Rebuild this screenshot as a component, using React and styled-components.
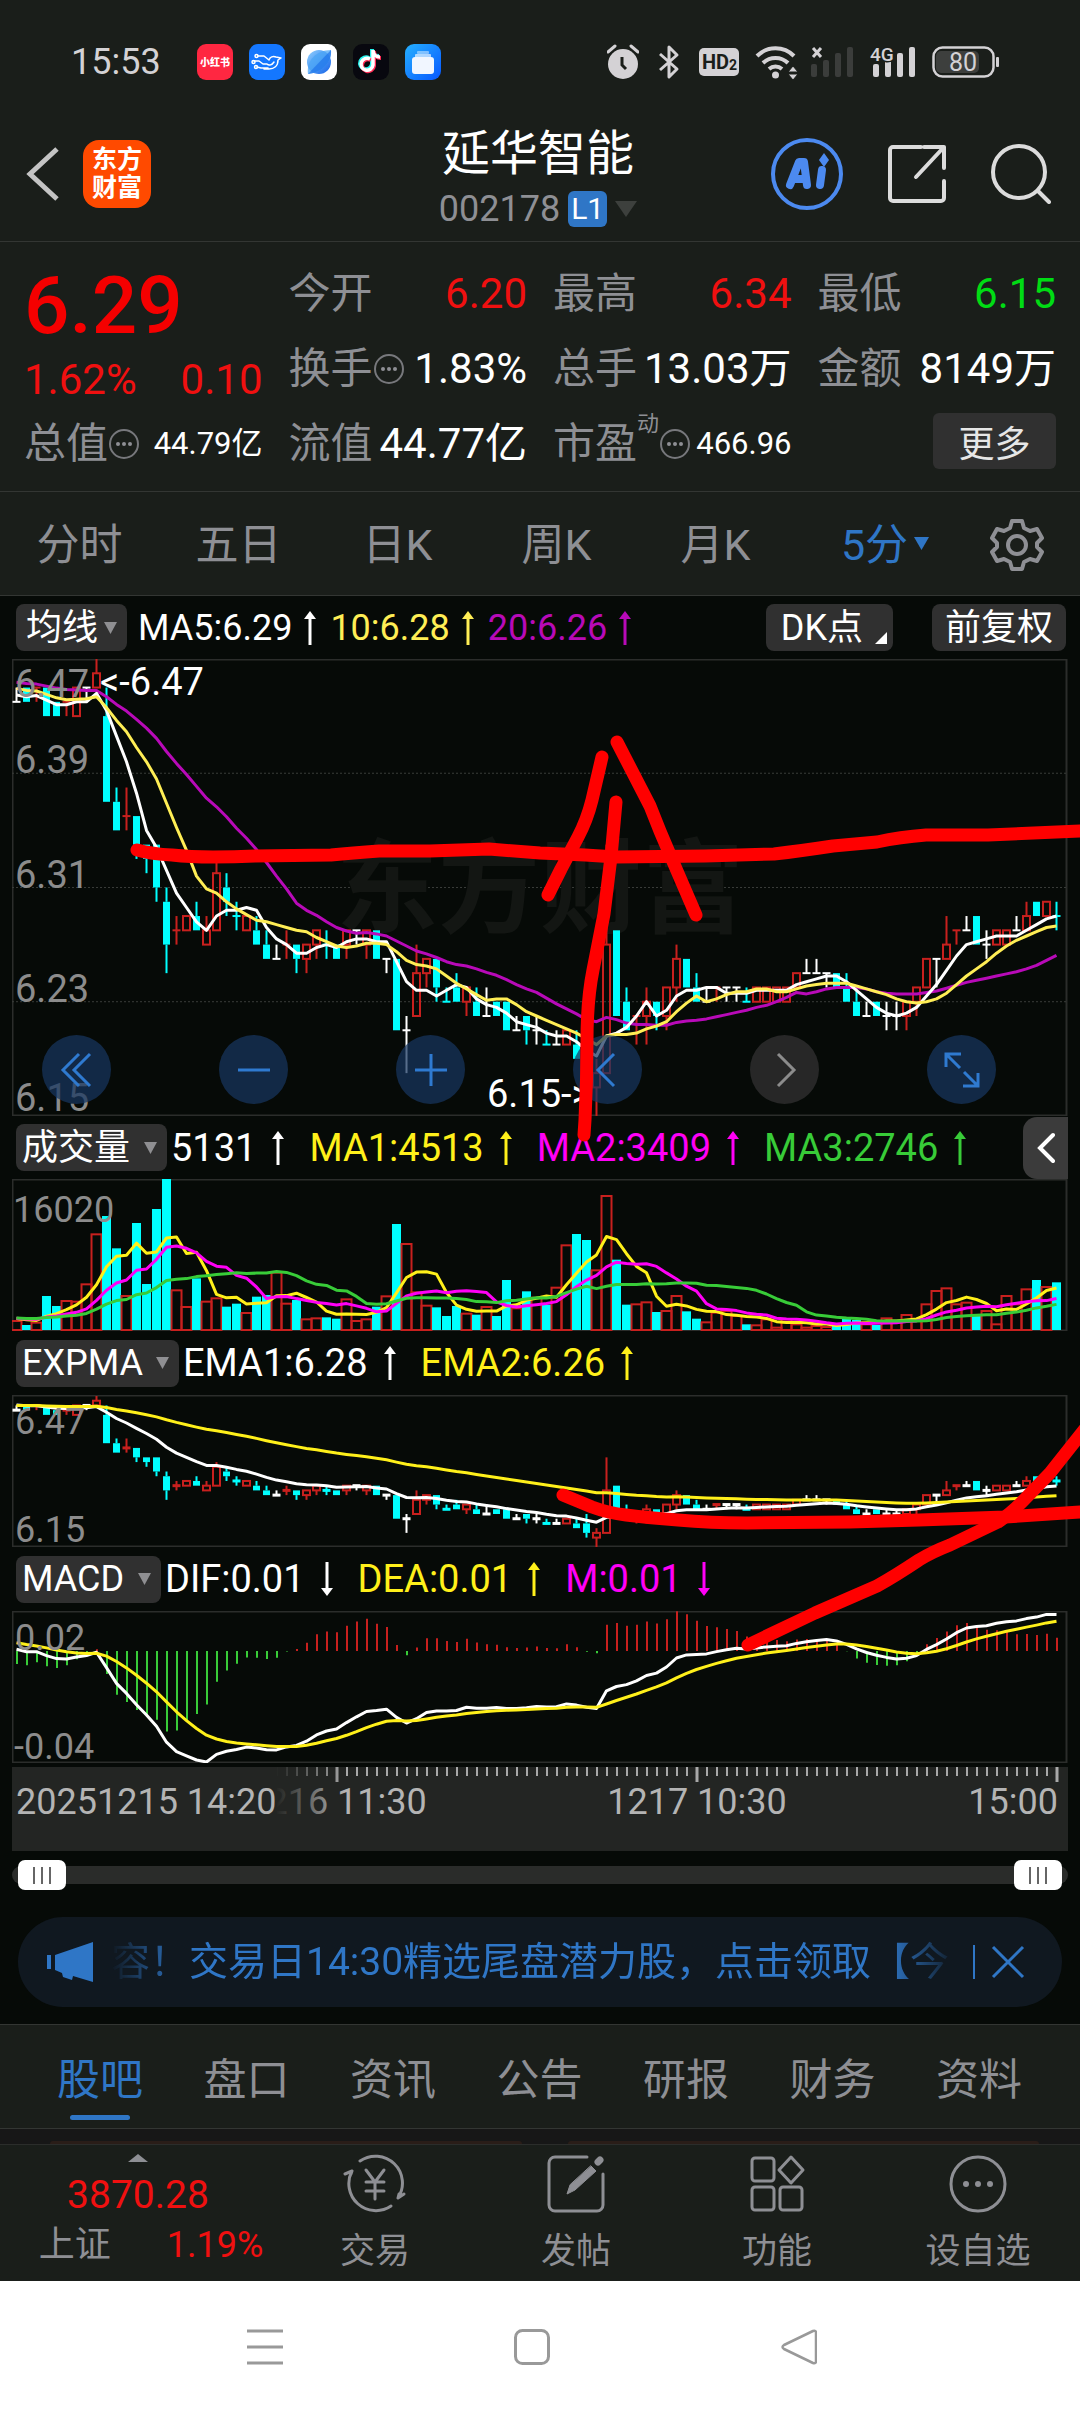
import React from "react";
import styled, { createGlobalStyle, css } from "styled-components";

const color = {
  panel: "#1a1e1a",
  chart: "#060a07",
  line: "#333633",
  frame: "#2b2d2b",
  chip: "#303030",
  muted: "#8e8f94",
  blue: "#2f76c6",
  red: "#f01010",
  green: "#00dc14",
  white: "#ffffff",
  yellow: "#fff01a",
  softYellow: "#ffee55",
  magenta: "#ff00f6",
  purple: "#b80ab8",
  ma3: "#38cc38",
  candleRed: "#c8201e",
  cyan: "#00ffff",
};

const GlobalStyle = createGlobalStyle`
  *, *::before, *::after { box-sizing: border-box; }
  body {
    margin: 0;
    background: ${color.panel};
    color: #fff;
    font-family: Roboto, "Noto Sans CJK SC", sans-serif;
  }
  button, select, input { font: inherit; color: inherit; margin: 0; }
  button { background: none; border: 0; padding: 0; cursor: pointer; }
  svg { display: block; }
  svg text { font-family: Roboto, "Noto Sans CJK SC", sans-serif; }
`;

/* ---------- market data: [kind, open/close top, open/close bottom, high, low], cents above 6.00 ---------- */

const CANDLES = [
  ["w", 44, 44, 45, 44], ["c", 45, 44, 45, 44], ["r", 45, 45, 45, 44], ["c", 45, 43, 45, 43], ["c", 44, 43, 44, 43],
  ["r", 44, 44, 44, 43], ["r", 45, 43, 45, 43], ["w", 45, 45, 45, 44], ["r", 46, 45, 47, 45], ["c", 43, 37, 45, 37],
  ["c", 37, 35, 38, 35], ["r", 36, 36, 38, 35], ["c", 36, 34, 36, 33], ["c", 34, 33, 34, 32], ["c", 34, 31, 34, 30],
  ["c", 30, 27, 31, 25], ["r", 28, 28, 29, 27], ["r", 29, 28, 29, 28], ["c", 29, 28, 30, 28], ["r", 28, 27, 29, 27],
  ["r", 32, 28, 33, 28], ["c", 31, 30, 32, 29], ["c", 29, 29, 30, 28], ["r", 29, 28, 29, 28], ["c", 28, 27, 29, 27],
  ["c", 27, 26, 28, 26], ["w", 26, 26, 27, 26], ["r", 27, 27, 28, 26], ["c", 27, 26, 27, 25], ["r", 27, 26, 27, 25],
  ["r", 28, 27, 28, 26], ["c", 27, 27, 28, 26], ["c", 27, 26, 27, 26], ["r", 28, 27, 28, 26], ["w", 28, 28, 28, 27],
  ["r", 28, 27, 28, 26], ["c", 28, 26, 28, 26], ["w", 26, 26, 26, 25], ["c", 26, 21, 26, 21], ["w", 21, 21, 22, 18],
  ["r", 25, 22, 27, 22], ["r", 26, 25, 26, 24], ["c", 26, 24, 26, 23], ["c", 23, 23, 24, 23], ["c", 24, 23, 25, 23],
  ["r", 24, 23, 24, 22], ["c", 23, 22, 24, 22], ["w", 22, 22, 24, 22], ["c", 23, 22, 23, 22], ["c", 23, 21, 23, 21],
  ["w", 21, 21, 22, 21], ["c", 22, 21, 22, 20], ["w", 21, 21, 22, 20], ["c", 20, 20, 21, 20], ["w", 20, 20, 21, 20],
  ["r", 21, 20, 21, 20], ["c", 20, 19, 21, 19], ["c", 20, 18, 22, 17], ["r", 18, 17, 19, 15], ["r", 27, 18, 34, 18],
  ["c", 28, 22, 28, 22], ["c", 23, 21, 24, 21], ["r", 22, 22, 22, 20], ["r", 23, 22, 24, 20], ["c", 23, 22, 23, 21],
  ["r", 24, 22, 24, 21], ["r", 26, 24, 27, 23], ["c", 26, 24, 26, 24], ["c", 24, 23, 25, 23], ["w", 23, 23, 24, 23],
  ["r", 24, 24, 24, 23], ["w", 24, 24, 24, 23], ["w", 24, 24, 24, 23], ["c", 23, 23, 24, 23], ["r", 24, 23, 24, 23],
  ["r", 24, 23, 24, 23], ["r", 24, 23, 24, 23], ["r", 24, 23, 24, 23], ["r", 25, 24, 25, 24], ["w", 25, 25, 26, 25],
  ["w", 25, 25, 26, 25], ["w", 25, 25, 25, 24], ["c", 25, 24, 25, 24], ["c", 24, 23, 25, 23], ["c", 23, 22, 24, 22],
  ["w", 22, 22, 23, 22], ["c", 23, 22, 23, 22], ["w", 22, 22, 23, 21], ["w", 22, 22, 23, 21], ["r", 23, 22, 23, 21],
  ["r", 24, 23, 24, 22], ["r", 26, 24, 26, 24], ["w", 26, 26, 26, 24], ["r", 27, 26, 29, 26], ["r", 28, 28, 28, 27],
  ["w", 28, 28, 29, 28], ["c", 29, 27, 29, 27], ["w", 27, 27, 28, 26], ["r", 28, 27, 28, 27], ["r", 28, 27, 28, 27],
  ["w", 28, 28, 29, 28], ["r", 29, 28, 30, 28], ["c", 30, 29, 30, 29], ["r", 30, 29, 30, 29], ["c", 29, 29, 30, 28],
];

const VOLUMES = [
  30, 15, 25, 102, 72, 90, 88, 140, 290, 342, 245, 105, 321, 138, 363, 453, 122, 72, 155, 88, 98, 70, 79, 54, 100,
  105, 175, 82, 90, 35, 38, 38, 34, 95, 30, 35, 70, 104, 318, 261, 116, 76, 68, 42, 72, 52, 46, 72, 42, 150,
  68, 116, 100, 76, 130, 257, 288, 270, 182, 405, 211, 76, 80, 86, 54, 60, 105, 56, 34, 26, 55, 60, 45, 17, 17,
  35, 10, 35, 20, 10, 15, 12, 12, 34, 30, 20, 15, 38, 30, 48, 35, 80, 120, 128, 80, 85, 44, 60, 20, 105,
  80, 125, 150, 132, 143,
];

const HISTORY = [...Array(10).fill(45.8), ...Array(5).fill(45.4), ...Array(4).fill(44.6)];
const closes = CANDLES.map(([kind, top, bottom]) => (kind === "c" ? bottom : top));

const average = (history, values, span) => {
  const all = [...history, ...values];
  return values.map((_, i) => {
    const end = i + history.length + 1;
    return all.slice(end - span, end).reduce((a, b) => a + b, 0) / span;
  });
};

const ema = (values, span, start) => {
  let last = start;
  return values.map((v, i) => {
    if (i > 0) last += (2 / (span + 1)) * (v - last);
    return last;
  });
};

const xAt = (i) => 4.5 + 10 * i;
const toPath = (values, y) => values.map((v, i) => `${i ? "L" : "M"}${xAt(i)} ${y(v).toFixed(1)}`).join("");

const CANDLE_COLORS = { w: "#ffffff", c: color.cyan, r: color.candleRed };

function Candles({ y, bar }) {
  return (
    <g>
      {CANDLES.map(([kind, top, bottom, high, low], i) => {
        const x = xAt(i);
        const paint = CANDLE_COLORS[kind];
        return (
          <g key={i} stroke={paint} strokeWidth="2" fill="none">
            {high > top && <path d={`M${x} ${y(high)}V${y(top)}`} />}
            {low < bottom && <path d={`M${x} ${y(bottom)}V${y(low)}`} />}
            {top === bottom && <path strokeWidth={bar} d={`M${x - 4} ${y(top)}h8`} />}
            {top !== bottom && kind === "c" && (
              <rect x={x - 3.5} y={y(top)} width="7" height={y(bottom) - y(top)} fill={paint} stroke="none" />
            )}
            {top !== bottom && kind === "r" && (
              <rect x={x - 3.5} y={y(top)} width="7" height={y(bottom) - y(top)} />
            )}
          </g>
        );
      })}
    </g>
  );
}

const Line = ({ d, stroke, width = 3 }) => (
  <path d={d} fill="none" stroke={stroke} strokeWidth={width} strokeLinejoin="round" />
);

const Frame = ({ height }) => (
  <rect x="0.5" y="0.5" width="1054" height={height - 1} fill="none" stroke={color.frame} strokeWidth="2" />
);

function PriceChart() {
  const y = (p) => (47 - p) * 14.28;
  return (
    <ChartSvg viewBox="0 0 1056 457" role="img" aria-label="5分 K线">
      <Frame height={457} />
      {[39, 31, 23].map((p) => (
        <path key={p} d={`M0 ${y(p)}H1055`} stroke="#3a3d3a" strokeDasharray="2 2" />
      ))}
      <text x="528" y="266" textAnchor="middle" fontSize="102" fontWeight="700" fill="#131613">东方财富</text>
      <Candles y={y} bar={2} />
      <Line d={toPath(average(HISTORY, closes, 20), y)} stroke={color.purple} />
      <Line d={toPath(average(HISTORY, closes, 5), y)} stroke="#fff" />
      <Line d={toPath(average(HISTORY, closes, 10), y)} stroke={color.softYellow} />
      <g fontSize="38" fill="#8c8c8c">
        <text x="3" y="38">6.47</text>
        <text x="3" y="114">6.39</text>
        <text x="3" y="229">6.31</text>
        <text x="3" y="343">6.23</text>
        <text x="3" y="452">6.15</text>
      </g>
      <g fontSize="38" fill="#fff">
        <text x="88" y="36">&lt;-6.47</text>
        <text x="475" y="448">6.15-&gt;</text>
      </g>
    </ChartSvg>
  );
}

function VolumeChart() {
  const y = (v) => 151 - v / 3;
  const pad = Array(19).fill(36);
  return (
    <ChartSvg viewBox="0 0 1056 152" role="img" aria-label="成交量">
      <Frame height={152} />
      {VOLUMES.map((v, i) =>
        CANDLES[i][0] === "c" ? (
          <rect key={i} x={xAt(i) - 4.5} y={y(v)} width="9" height={v / 3} fill={color.cyan} />
        ) : (
          <rect key={i} x={xAt(i) - 5} y={y(v) + 1} width="10" height={v / 3 - 1} fill="none" stroke={color.candleRed} strokeWidth="2" />
        )
      )}
      <Line d={toPath(average(pad, VOLUMES, 5), y)} stroke={color.yellow} />
      <Line d={toPath(average(pad, VOLUMES, 10), y)} stroke={color.magenta} />
      <Line d={toPath(average(pad, VOLUMES, 20), y)} stroke={color.ma3} />
      <text x="1" y="43" fontSize="36" fill="#8c8c8c">16020</text>
    </ChartSvg>
  );
}

function ExpmaChart() {
  const y = (p) => 1 + (47 - p) * 4.72;
  return (
    <ChartSvg viewBox="0 0 1056 152" role="img" aria-label="EXPMA">
      <Frame height={152} />
      <Candles y={y} bar={3} />
      <Line d={toPath(ema(closes, 12, 45.1), y)} stroke="#fff" />
      <Line d={toPath(ema(closes, 50, 45), y)} stroke={color.yellow} />
      <g fontSize="36" fill="#8c8c8c">
        <text x="3" y="39">6.47</text>
        <text x="3" y="147">6.15</text>
      </g>
    </ChartSvg>
  );
}

function MacdChart() {
  const fast = ema(closes, 12, 45.18);
  const slow = ema(closes, 26, 45.11);
  const dif = fast.map((v, i) => v - slow[i]);
  const dea = ema(dif, 9, 0.33);
  const scale = 111 / -Math.min(...dif);
  const y = (v) => 40 - v * scale;
  return (
    <ChartSvg viewBox="0 0 1056 152" role="img" aria-label="MACD">
      <Frame height={152} />
      {dif.map((v, i) => {
        const m = 2 * (v - dea[i]);
        return <path key={i} d={`M${xAt(i) + 0.5} 40V${y(m)}`} stroke={m > 0 ? color.candleRed : color.ma3} strokeWidth="2" />;
      })}
      <Line d={toPath(dif, y)} stroke="#fff" />
      <Line d={toPath(dea, y)} stroke={color.yellow} />
      <g fontSize="36" fill="#8c8c8c">
        <text x="3" y="39">0.02</text>
        <text x="2" y="148">-0.04</text>
      </g>
    </ChartSvg>
  );
}

function TimeAxis() {
  const major = [32, 68, 104];
  return (
    <ChartSvg viewBox="0 0 1056 84" role="img" aria-label="时间轴">
      <defs>
        <linearGradient id="axisFade">
          <stop offset="0" stopColor="#232523" />
          <stop offset="1" stopColor="#232523" stopOpacity="0" />
        </linearGradient>
      </defs>
      <rect width="1056" height="84" fill="#232523" />
      {CANDLES.map((_, i) => {
        const big = major.includes(i);
        return i > 25 && <path key={i} d={`M${xAt(i) + 0.5} 0v${big ? 15 : 9}`} stroke="#a8a8a8" strokeWidth={big ? 3 : 2} />;
      })}
      <g fontSize="36" fill="#b4b4b4">
        <text x="325" y="47" textAnchor="middle">1216 11:30</text>
        <text x="685" y="47" textAnchor="middle">1217 10:30</text>
        <text x="1046" y="47" textAnchor="end">15:00</text>
        <rect width="265" height="84" fill="#232523" />
        <rect x="264" width="70" height="84" fill="url(#axisFade)" />
        <text x="4" y="47">20251215 14:20</text>
      </g>
    </ChartSvg>
  );
}

const STROKES = [
  "M137 850Q152 854 172 855Q190 857 213 857Q235 857 255 856L331 855Q352 853 379 851L430 851L489 849Q515 851 540 853L585 855L616 857L705 856L774 854Q800 851 833 846L877 842Q900 837 926 835H988L1080 831",
  "M602 757L592 800Q587 820 578 837L561 869L548 895",
  "M617 742L650 806Q660 832 671 857L696 915",
  "M616 802L611 857L604 914L593 970Q587 1000 587 1040Q587 1080 585 1120L584 1135",
  "M563 1495L592 1507Q608 1513 626 1515Q650 1518 678 1520Q710 1523 747 1523L850 1522L919 1520L1005 1517L1080 1512",
  "M748 1645L815 1613L877 1586Q895 1576 919 1560Q932 1552 950 1545L998 1522Q1010 1514 1022 1502L1050 1473L1092 1420",
];

/* ---------- layout parts ---------- */

const Page = styled.main`
  display: flex;
  flex-direction: column;
  min-width: 0;
  overflow: hidden;
`;

const StatusBar = styled.div`
  display: flex;
  align-items: center;
  justify-content: space-between;
  height: 106px;
  padding: 18px 81px 0 71px;
  color: #d4d2d5;
`;

const StatusGroup = styled.div`
  display: flex;
  align-items: center;
  gap: 16px;
`;

const Clock = styled.time`
  font-size: 36px;
  line-height: 40px;
  margin-right: 20px;
`;

const Header = styled.header`
  display: grid;
  grid-template-columns: 1fr auto 1fr;
  align-items: center;
  height: 136px;
  padding: 0 29px 0 25px;
  border-bottom: 1px solid ${color.line};
`;

const HeaderSide = styled.div`
  display: flex;
  align-items: center;
  justify-content: ${(p) => (p.$end ? "flex-end" : "flex-start")};
  gap: ${(p) => (p.$end ? 44 : 24)}px;
`;

const Logo = styled.div`
  display: grid;
  place-content: center;
  width: 68px;
  height: 68px;
  border-radius: 16px;
  background: #ff4a00;
  font-size: 25px;
  font-weight: 700;
  line-height: 28px;
  text-align: center;
`;

const TitleBlock = styled.div`
  display: flex;
  flex-direction: column;
  align-items: center;
  padding-top: 10px;
`;

const Title = styled.h1`
  margin: 0;
  font-size: 48px;
  font-weight: 400;
  line-height: 60px;
`;

const Code = styled.button`
  display: flex;
  align-items: center;
  gap: 8px;
  font-size: 36px;
  line-height: 50px;
  color: ${color.muted};
`;

const Level = styled.span`
  width: 39px;
  border-radius: 6px;
  background: ${color.blue};
  color: #fff;
  font-size: 30px;
  line-height: 36px;
  text-align: center;
`;

const Quote = styled.section`
  display: grid;
  grid-template-columns: repeat(4, 1fr);
  grid-template-rows: repeat(3, 75px);
  column-gap: 26px;
  padding: 14px 24px 10px;
  border-bottom: 1px solid ${color.line};
`;

const Headline = styled.div`
  display: flex;
  flex-direction: column;
  grid-row: span 2;
  padding-top: 7px;
  color: ${color.red};
`;

const Price = styled.strong`
  font-size: 80px;
  font-weight: 500;
  line-height: 86px;
  color: #f50000;
`;

const Change = styled.div`
  display: flex;
  justify-content: space-between;
  font-size: 42px;
  line-height: 62px;
`;

const Cell = styled.div`
  display: flex;
  align-items: center;
  white-space: nowrap;
  font-size: 42px;
  line-height: 60px;
`;

const CellLabel = styled.span`
  color: ${color.muted};
`;

const Superscript = styled.sup`
  align-self: flex-start;
  font-size: 22px;
  line-height: 36px;
  color: ${color.muted};
`;

const CellValue = styled.span`
  margin-left: auto;
  font-size: ${(p) => (p.$small ? 31 : 42)}px;
  color: ${(p) => p.$tone || "#fff"};
`;

const MoreButton = styled.button`
  justify-self: end;
  align-self: center;
  width: 123px;
  height: 56px;
  margin-bottom: 6px;
  border-radius: 6px;
  background: ${color.chip};
  color: #e6e6e6;
  font-size: 36px;
`;

const Periods = styled.nav`
  display: grid;
  grid-template-columns: repeat(6, 159fr) 126fr;
  align-items: center;
  justify-items: center;
  height: 104px;
  padding-top: 2px;
  border-bottom: 1px solid ${color.line};
`;

const Period = styled.button`
  position: relative;
  font-size: 43px;
  line-height: 60px;
  color: ${(p) => (p.$active ? color.blue : color.muted)};
`;

const PeriodMark = styled.span`
  position: absolute;
  left: calc(100% + 6px);
  top: 22px;
`;

const ChartSection = styled.section`
  position: relative;
  background: ${color.chart};
  padding-bottom: 17px;
  border-bottom: 1px solid ${color.line};
`;

const ChartBox = styled.div`
  position: relative;
  margin: 0 12px;
`;

const ChartSvg = styled.svg`
  width: 100%;
  height: auto;
`;

const Annotations = styled.svg`
  position: absolute;
  inset: 0 0 auto 0;
  width: 100%;
  height: auto;
  pointer-events: none;
`;

const IndicatorRow = styled.div`
  display: flex;
  align-items: center;
  height: ${(p) => p.$height || 64}px;
  padding: 0 14px 0 16px;
  white-space: nowrap;
`;

const Picker = styled.label`
  display: flex;
  align-items: center;
  gap: ${(p) => (p.$compact ? 5 : 13)}px;
  height: 47px;
  padding: 0 10px 0 ${(p) => (p.$compact ? 10 : 6)}px;
  margin-right: ${(p) => (p.$compact ? 11 : 4)}px;
  border-radius: 8px;
  background: ${color.chip};
`;

const PickerSelect = styled.select`
  appearance: none;
  border: 0;
  padding: 0;
  background: transparent;
  color: #fff;
  font-size: 36px;
  line-height: 44px;
  outline: none;
`;

const Readings = styled.div`
  display: flex;
  align-items: center;
  gap: ${(p) => (p.$compact ? 14 : 25)}px;
  font-size: ${(p) => (p.$compact ? 36 : 38)}px;
  line-height: 48px;
`;

const Reading = styled.span`
  display: flex;
  align-items: center;
  gap: ${(p) => (p.$compact ? 12 : 16)}px;
  color: ${(p) => p.$tone};
`;

const Chip = styled.button`
  display: flex;
  align-items: center;
  justify-content: center;
  gap: 12px;
  height: 47px;
  padding: 0 ${(p) => (p.$corner ? 6 : 13)}px 0 ${(p) => (p.$corner ? 15 : 13)}px;
  margin-left: ${(p) => (p.$push ? "auto" : "39px")};
  border-radius: 8px;
  background: ${color.chip};
  color: #fff;
  font-size: 36px;
  line-height: 44px;
`;

const Corner = styled.span`
  align-self: flex-end;
  margin-bottom: 7px;
  border: 6px solid;
  border-color: transparent #fff #fff transparent;
`;

const Expand = styled.button`
  display: grid;
  place-content: center;
  width: 45px;
  height: 62px;
  margin: 0 -2px 0 auto;
  border-radius: 14px 0 0 14px;
  background: #3b3b3b;
`;

const ZoomBar = styled.div`
  position: absolute;
  left: 30px;
  right: 72px;
  bottom: 12px;
  display: flex;
  justify-content: space-between;
`;

const Round = styled.button`
  display: grid;
  place-content: center;
  width: 69px;
  height: 69px;
  border-radius: 50%;
  background: ${(p) => (p.$off ? "#2a2a2aee" : "#17365fb8")};
`;

const AxisBox = styled(ChartBox)`
  margin-top: 4px;
`;

const Slider = styled.div`
  position: relative;
  display: flex;
  align-items: center;
  height: 30px;
  margin: 9px 12px 27px;
`;

const Track = styled.div`
  flex: 1;
  height: 18px;
  border-radius: 9px;
  background: #2a2c2a;
`;

const thumb = css`
  appearance: none;
  width: 48px;
  height: 30px;
  border: 0;
  border-radius: 7px;
  pointer-events: auto;
  background:
    linear-gradient(#666, #666) 15px 7px / 2px 17px no-repeat,
    linear-gradient(#666, #666) 23px 7px / 2px 17px no-repeat,
    linear-gradient(#666, #666) 31px 7px / 2px 17px no-repeat,
    #fff;
`;

const Handle = styled.input`
  position: absolute;
  inset: 0 6px;
  width: calc(100% - 12px);
  height: 30px;
  appearance: none;
  background: transparent;
  pointer-events: none;
  &::-webkit-slider-thumb { ${thumb} }
  &::-moz-range-thumb { ${thumb} }
`;

const Notice = styled.aside`
  display: flex;
  align-items: center;
  height: 90px;
  margin: 0 18px;
  padding: 0 37px 0 29px;
  border-radius: 45px;
  background: #101820;
  color: ${color.blue};
`;

const NoticeLink = styled.a`
  flex: 1;
  min-width: 0;
  overflow: hidden;
  margin: 0 15px 0 18px;
  color: inherit;
  text-decoration: none;
  white-space: nowrap;
  font-size: 39px;
  line-height: 60px;
  mask-image: linear-gradient(90deg, transparent, #000 70px calc(100% - 70px), transparent);
`;

const NoticeClose = styled.button`
  display: flex;
  align-items: center;
  padding-left: 16px;
  border-left: 2px solid ${color.blue};
`;

const Tabs = styled.nav`
  display: flex;
  justify-content: space-between;
  height: 104px;
  padding: 24px 58px 8px 57px;
  border-bottom: 1px solid ${color.line};
`;

const Tab = styled.a`
  display: flex;
  flex-direction: column;
  align-items: center;
  gap: 4px;
  font-size: 43px;
  line-height: 62px;
  text-decoration: none;
  color: ${(p) => (p.$active ? color.blue : color.muted)};
  &::after {
    content: "";
    width: 60px;
    height: 6px;
    border-radius: 3px;
    background: ${(p) => (p.$active ? color.blue : "transparent")};
  }
`;

const FeedPeek = styled.div`
  display: grid;
  grid-template-columns: 1fr 1fr;
  gap: 46px;
  align-items: end;
  height: 15px;
  padding: 0 41px 0 50px;
  background: #171717;
`;

const FeedCard = styled.div`
  height: 3px;
  border-radius: 3px 3px 0 0;
  background: #2a1d18;
`;

const BottomBar = styled.nav`
  display: grid;
  grid-template-columns: 276fr repeat(4, 201fr);
  height: 137px;
  border-top: 1px solid #2b2d2b;
`;

const IndexButton = styled.button`
  display: flex;
  flex-direction: column;
  align-items: center;
  justify-content: flex-start;
  padding-top: 9px;
  font-size: 39px;
  line-height: 56px;
  color: ${color.red};
`;

const IndexValue = styled.span`
  margin-top: 5px;
`;

const IndexMeta = styled.span`
  display: flex;
  gap: 56px;
  padding-left: 26px;
  font-size: 36px;
  line-height: 44px;
`;

const IndexName = styled.span`
  color: ${color.muted};
`;

const Action = styled.button`
  display: flex;
  flex-direction: column;
  align-items: center;
  gap: 16px;
  padding: 9px 3px 0 0;
  font-size: 35px;
  line-height: 44px;
  color: ${color.muted};
`;

const SystemNav = styled.div`
  display: flex;
  justify-content: space-between;
  padding: 46px 261px 46px 245px;
  height: 132px;
  background: #fff;
`;

const SystemButton = styled.button`
  display: grid;
  place-content: center;
  width: 40px;
  height: 40px;
`;

/* ---------- drawings ---------- */

const Triangle = ({ width = 13, height = 12, fill = "#8f8f92" }) => (
  <svg width={width} height={height} viewBox="0 0 10 10" preserveAspectRatio="none" aria-hidden="true">
    <path d="M0 0h10L5 10z" fill={fill} />
  </svg>
);

const Arrow = ({ down }) => (
  <svg width="12" height="34" viewBox="0 0 12 34" aria-hidden="true">
    <g fill="currentColor" transform={down ? "rotate(180 6 17)" : undefined}>
      <path d="M6 0l6 8H0z" />
      <path d="M4.5 6h3v28h-3z" />
    </g>
  </svg>
);

const InfoIcon = () => (
  <svg width="32" height="32" viewBox="0 0 32 32" fill={color.muted} aria-hidden="true">
    <circle cx="16" cy="16" r="14" fill="none" stroke="#77787c" strokeWidth="2" />
    <circle cx="10" cy="16" r="2" /><circle cx="16" cy="16" r="2" /><circle cx="22" cy="16" r="2" />
  </svg>
);

const AppIcon = ({ children }) => <svg width="36" height="36" viewBox="0 0 36 36" aria-hidden="true">{children}</svg>;

const AppIcons = () => (
  <>
    <AppIcon>
      <rect width="36" height="36" rx="9" fill="#ff2741" />
      <text x="18" y="22" textAnchor="middle" fontSize="10" fontWeight="900" fill="#fff">小红书</text>
    </AppIcon>
    <AppIcon>
      <rect width="36" height="36" rx="9" fill="#1477ff" />
      <g fill="none" stroke="#fff" strokeWidth="1.5" strokeLinecap="round" strokeLinejoin="round">
        <path d="M9 12h6l5 4c1-3 4-4 7-3l5 1-3 2c0 6-4 9-9 9h-5M5 17h5l4 3h4M8 23l4 1h7M18 20c2 2 5 1 7-2" />
        <circle cx="7.500" cy="12" r="1.500" /><circle cx="4.500" cy="18" r="1.500" /><circle cx="7" cy="23" r="1.500" />
      </g>
    </AppIcon>
    <AppIcon>
      <defs><linearGradient id="leaf" x1="0" y1="0" x2="1" y2="1"><stop stopColor="#8fd0ff" /><stop offset="1" stopColor="#1463e8" /></linearGradient></defs>
      <rect width="36" height="36" rx="9" fill="#fff" />
      <circle cx="18" cy="18" r="12" fill="url(#leaf)" />
      <path d="M7 30C5 17 15 6 30 6c1 12-8 22-23 24z" fill="#4ba5f5" opacity=".75" />
      <path d="M7 30L30 6c1 12-8 22-23 24z" fill="#1f74ea" opacity=".7" />
    </AppIcon>
    <AppIcon>
      <rect width="36" height="36" rx="9" fill="#08080f" />
      <g fill="none" strokeWidth="4">
        <path stroke="#25f4ee" d="M17 15a6 6 0 1 0 3 6V6c0 4 3 7 7 7" transform="translate(-1 -1)" />
        <path stroke="#fe2c55" d="M17 15a6 6 0 1 0 3 6V6c0 4 3 7 7 7" transform="translate(1 1)" />
        <path stroke="#fff" strokeWidth="3.500" d="M17 15a6 6 0 1 0 3 6V6c0 4 3 7 7 7" />
      </g>
    </AppIcon>
    <AppIcon>
      <defs><linearGradient id="files" x1="0" y1="0" x2="1" y2="1"><stop stopColor="#25b0ff" /><stop offset="1" stopColor="#0757ff" /></linearGradient></defs>
      <rect width="36" height="36" rx="9" fill="url(#files)" />
      <rect x="12" y="7" width="12" height="3" rx="1" fill="#fff" opacity=".45" />
      <rect x="10" y="10" width="16" height="4" rx="1" fill="#fff" opacity=".65" />
      <rect x="7" y="13" width="22" height="17" rx="3" fill="#f1f6ff" />
    </AppIcon>
  </>
);

const AlarmIcon = () => (
  <svg width="32" height="36" viewBox="0 0 32 36" aria-hidden="true">
    <circle cx="16" cy="20" r="15" fill="currentColor" />
    <path d="M1 8l7-6M31 8l-7-6" stroke="currentColor" strokeWidth="3" strokeLinecap="round" />
    <path d="M15 13v8l4 4" stroke={color.panel} strokeWidth="3" fill="none" />
  </svg>
);

const BluetoothIcon = () => (
  <svg width="28" height="36" viewBox="-3 0 28 36" fill="none" stroke="currentColor" strokeWidth="3" strokeLinejoin="round" aria-hidden="true">
    <path d="M2 10l17 15-8 8V3l8 8L2 26" />
  </svg>
);

const HdIcon = () => (
  <svg width="40" height="28" viewBox="0 0 40 28" aria-hidden="true">
    <rect width="40" height="28" rx="5" fill="currentColor" />
    <text x="3" y="21" fontSize="20" fontWeight="700" fill={color.panel}>HD</text>
    <text x="30" y="22" fontSize="14" fontWeight="700" fill={color.panel}>2</text>
  </svg>
);

const WifiIcon = () => (
  <svg width="40" height="36" viewBox="0 0 44 36" overflow="visible" preserveAspectRatio="xMinYMid slice" fill="none" stroke="currentColor" strokeWidth="4" aria-hidden="true">
    <path d="M2 12a26 26 0 0 1 37 0M8 19a18 18 0 0 1 25 0M14 25a10 10 0 0 1 13 0" />
    <circle cx="20.500" cy="31" r="3.500" fill="currentColor" stroke="none" />
    <path d="M38 22l5 6H33zM38 36l5-6H33z" fill="currentColor" stroke={color.panel} strokeWidth="1" />
  </svg>
);

const SignalIcon = ({ off }) => (
  <svg width={off ? 43 : 46} height="36" viewBox={`0 0 ${off ? 43 : 46} 36`} aria-hidden="true">
    <g fill={off ? "#3b3d3b" : "currentColor"}>
      {[[20, 0], [16, 1], [9, 2], [3, 3]].map(([y, i]) => (
        <rect key={i} x={(off ? 0 : 3) + i * 12} y={y} width="6" height={33 - y} rx="2" />
      ))}
    </g>
    {off ? (
      <path d="M2 4l8 9M10 4l-8 9" stroke="currentColor" strokeWidth="3" />
    ) : (
      <text x="0" y="17" fontSize="19" fontWeight="500" fill="currentColor" stroke={color.panel} strokeWidth="3" paintOrder="stroke">4G</text>
    )}
  </svg>
);

const BatteryIcon = () => (
  <svg width="67" height="32" viewBox="0 0 67 32" aria-hidden="true">
    <rect x="4" y="5" width="43" height="22" rx="5" fill="#3d3f3d" />
    <rect x="1.500" y="1.500" width="60" height="29" rx="9" fill="none" stroke="currentColor" strokeWidth="2.500" />
    <rect x="64" y="11" width="3" height="10" rx="1" fill="currentColor" />
    <text x="31" y="25" textAnchor="middle" fontSize="25" fill="currentColor">80</text>
  </svg>
);

const BackIcon = () => (
  <svg width="34" height="56" viewBox="0 0 34 56" fill="none" stroke="#c4c4c4" strokeWidth="5" aria-hidden="true">
    <path d="M32 3L5 28l27 25" />
  </svg>
);

const AiIcon = () => (
  <svg width="72" height="72" viewBox="0 0 72 72" aria-hidden="true">
    <circle cx="36" cy="36" r="34" fill="none" stroke="#4c8af0" strokeWidth="4" />
    <g fill="none" stroke="#4c8af0" strokeWidth="8" strokeLinecap="round" strokeLinejoin="round">
      <path d="M19 47l9-23h5l3 23M24 41h11" />
      <path d="M51 32l-2 15" />
    </g>
    <path d="M53 15l5 7-5 7-5-7z" fill="#4c8af0" />
  </svg>
);

const ShareIcon = () => (
  <svg width="60" height="60" viewBox="0 0 60 60" fill="none" stroke="#dcdcdc" strokeWidth="4" strokeLinecap="round" strokeLinejoin="round" aria-hidden="true">
    <path d="M34 3H6a3 3 0 0 0-3 3v48a3 3 0 0 0 3 3h48a3 3 0 0 0 3-3V37M37 3h20v21M57 3L29 33" />
  </svg>
);

const SearchIcon = () => (
  <svg width="60" height="60" viewBox="0 0 60 60" fill="none" stroke="#dcdcdc" strokeWidth="4" strokeLinecap="round" aria-hidden="true">
    <circle cx="28" cy="28" r="26" /><path d="M47 47l11 11" />
  </svg>
);

const GearIcon = () => (
  <svg width="54" height="54" viewBox="0 0 54 54" fill="none" stroke={color.muted} strokeWidth="4" strokeLinejoin="round" aria-hidden="true">
    <path d="M22 3h10l2 7 6 3 7-2 5 9-5 5v4l5 5-5 9-7-2-6 3-2 7H22l-2-7-6-3-7 2-5-9 5-5v-4l-5-5 5-9 7 2 6-3z" />
    <circle cx="27" cy="27" r="9" />
  </svg>
);

const ROUND_PATHS = {
  first: "M20 2L4 18l16 16M31 2L15 18l16 16",
  minus: "M2 18h32",
  plus: "M2 18h32M18 2v32",
  prev: "M24 2L8 18l16 16",
  next: "M11 2l16 16-16 16",
  full: "M2 15V2h15M3 3l13 13M34 21v13H19M33 33L20 20",
};

const RoundIcon = ({ name, stroke = "#2f7ad0" }) => (
  <svg width="36" height="36" viewBox="0 0 36 36" fill="none" stroke={stroke} strokeWidth="3" aria-hidden="true">
    <path d={ROUND_PATHS[name]} />
  </svg>
);

const HornIcon = () => (
  <svg width="46" height="40" viewBox="0 0 46 40" fill="currentColor" aria-hidden="true">
    <path d="M0 13h4v14H0zM8 13L46 0v40L26 34l-1 4-9-3-1-4-7-3z" />
  </svg>
);

const CloseIcon = () => (
  <svg width="34" height="34" viewBox="0 0 34 34" stroke="currentColor" strokeWidth="3" aria-hidden="true">
    <path d="M2 2l30 30M32 2L2 32" />
  </svg>
);

const ActionIcon = ({ children }) => (
  <svg width="66" height="60" viewBox="0 0 66 60" fill="none" stroke="currentColor" strokeWidth="3" strokeLinecap="round" strokeLinejoin="round" aria-hidden="true">
    {children}
  </svg>
);

const TradeIcon = () => (
  <ActionIcon>
    <path d="M18 7a27 27 0 0 1 38 37l6-4M56 44l1-4M49 52A27 27 0 0 1 10 17L3 20M10 17l-1 3" />
    <path d="M24 16l9 12 9-12M24 28h18M24 37h18M33 28v17" />
  </ActionIcon>
);

const PostIcon = () => (
  <ActionIcon>
    <path d="M44 3H12a6 6 0 0 0-6 6v42a6 6 0 0 0 6 6h42a6 6 0 0 0 6-6V20" />
    <path d="M48 12l5 5-21 19-8 4 3-9z" fill="currentColor" strokeWidth="1" />
    <path d="M55 8l2-2" strokeWidth="7" />
  </ActionIcon>
);

const GridIcon = () => (
  <ActionIcon>
    <rect x="8" y="4" width="22" height="23" rx="3" /><rect x="8" y="33" width="22" height="23" rx="3" />
    <rect x="36" y="33" width="22" height="23" rx="3" /><path d="M47 3l12 13-12 13-12-13z" />
  </ActionIcon>
);

const MoreIcon = () => (
  <ActionIcon>
    <circle cx="33" cy="30" r="27" />
    <g fill="currentColor" stroke="none"><circle cx="21" cy="30" r="3" /><circle cx="33" cy="30" r="3" /><circle cx="45" cy="30" r="3" /></g>
  </ActionIcon>
);

/* ---------- page ---------- */

function IndicatorPicker({ name, label, compact }) {
  return (
    <Picker $compact={compact}>
      <PickerSelect aria-label={label} defaultValue={name}>
        <option value={name}>{name}</option>
      </PickerSelect>
      <Triangle />
    </Picker>
  );
}

function ReadingList({ items, compact }) {
  return (
    <Readings $compact={compact}>
      {items.map(([text, tone, down]) => (
        <Reading key={text} $tone={tone} $compact={compact}>{text}<Arrow down={down} /></Reading>
      ))}
    </Readings>
  );
}

function Stat({ label, sup, info, value, tone, small }) {
  return (
    <Cell>
      <CellLabel>{label}</CellLabel>
      {sup && <Superscript>{sup}</Superscript>}
      {info && <InfoIcon />}
      <CellValue $tone={tone} $small={small}>{value}</CellValue>
    </Cell>
  );
}

export default function App() {
  return (
    <>
      <GlobalStyle />
      <Page>
        <StatusBar>
          <StatusGroup><Clock>15:53</Clock><AppIcons /></StatusGroup>
          <StatusGroup>
            <AlarmIcon /><BluetoothIcon /><HdIcon /><WifiIcon /><SignalIcon off /><SignalIcon /><BatteryIcon />
          </StatusGroup>
        </StatusBar>

        <Header>
          <HeaderSide>
            <button aria-label="返回"><BackIcon /></button>
            <Logo>东方<br />财富</Logo>
          </HeaderSide>
          <TitleBlock>
            <Title>延华智能</Title>
            <Code>002178<Level>L1</Level><Triangle width={22} height={16} fill="#3d403d" /></Code>
          </TitleBlock>
          <HeaderSide $end>
            <button aria-label="AI"><AiIcon /></button>
            <button aria-label="分享"><ShareIcon /></button>
            <button aria-label="搜索"><SearchIcon /></button>
          </HeaderSide>
        </Header>

        <Quote>
          <Headline>
            <Price>6.29</Price>
            <Change><span>1.62%</span><span>0.10</span></Change>
          </Headline>
          <Stat label="今开" value="6.20" tone={color.red} />
          <Stat label="最高" value="6.34" tone={color.red} />
          <Stat label="最低" value="6.15" tone={color.green} />
          <Stat label="换手" info value="1.83%" />
          <Stat label="总手" value="13.03万" />
          <Stat label="金额" value="8149万" />
          <Stat label="总值" info value="44.79亿" small />
          <Stat label="流值" value="44.77亿" />
          <Stat label="市盈" sup="动" info value="466.96" small />
          <MoreButton>更多</MoreButton>
        </Quote>

        <Periods>
          {["分时", "五日", "日K", "周K", "月K"].map((t) => <Period key={t}>{t}</Period>)}
          <Period $active>5分<PeriodMark><Triangle width={15} height={13} fill={color.blue} /></PeriodMark></Period>
          <button aria-label="设置"><GearIcon /></button>
        </Periods>

        <ChartSection>
          <IndicatorRow $height={63}>
            <IndicatorPicker name="均线" label="主图指标" compact />
            <ReadingList compact items={[["MA5:6.29", "#fff"], ["10:6.28", color.softYellow], ["20:6.26", color.purple]]} />
            <Chip $push $corner>DK点<Corner /></Chip>
            <Chip>前复权</Chip>
          </IndicatorRow>
          <ChartBox>
            <PriceChart />
            <ZoomBar>
              <Round aria-label="最早"><RoundIcon name="first" /></Round>
              <Round aria-label="缩小"><RoundIcon name="minus" /></Round>
              <Round aria-label="放大"><RoundIcon name="plus" /></Round>
              <Round aria-label="向前"><RoundIcon name="prev" /></Round>
              <Round $off aria-label="向后"><RoundIcon name="next" stroke="#8c8c8c" /></Round>
              <Round aria-label="全屏"><RoundIcon name="full" /></Round>
            </ZoomBar>
          </ChartBox>

          <IndicatorRow $height={63}>
            <IndicatorPicker name="成交量" label="副图指标一" />
            <ReadingList items={[["5131", "#fff"], ["MA1:4513", color.yellow], ["MA2:3409", color.magenta], ["MA3:2746", color.ma3]]} />
            <Expand aria-label="展开">
              <svg width="18" height="32" viewBox="0 0 18 32" fill="none" stroke="#fff" strokeWidth="4" strokeLinecap="round" aria-hidden="true">
                <path d="M16 3L3 16l13 13" />
              </svg>
            </Expand>
          </IndicatorRow>
          <ChartBox><VolumeChart /></ChartBox>

          <IndicatorRow>
            <IndicatorPicker name="EXPMA" label="副图指标二" />
            <ReadingList items={[["EMA1:6.28", "#fff"], ["EMA2:6.26", color.yellow]]} />
          </IndicatorRow>
          <ChartBox><ExpmaChart /></ChartBox>

          <IndicatorRow>
            <IndicatorPicker name="MACD" label="副图指标三" />
            <ReadingList items={[["DIF:0.01", "#fff", true], ["DEA:0.01", color.yellow], ["M:0.01", color.magenta, true]]} />
          </IndicatorRow>
          <ChartBox><MacdChart /></ChartBox>
          <AxisBox><TimeAxis /></AxisBox>

          <Slider>
            <Track />
            <Handle type="range" min="0" max="100" defaultValue="0" aria-label="起始时间" />
            <Handle type="range" min="0" max="100" defaultValue="100" aria-label="结束时间" />
          </Slider>

          <Notice>
            <HornIcon />
            <NoticeLink href="#notice">容！交易日14:30精选尾盘潜力股，点击领取【今</NoticeLink>
            <NoticeClose aria-label="关闭"><CloseIcon /></NoticeClose>
          </Notice>

          <Annotations viewBox="0 596 1080 1255" aria-hidden="true">
            <g fill="none" stroke="#ff0000" strokeWidth="13" strokeLinecap="round" strokeLinejoin="round">
              {STROKES.map((d) => <path key={d} d={d} />)}
            </g>
          </Annotations>
        </ChartSection>

        <Tabs>
          {["股吧", "盘口", "资讯", "公告", "研报", "财务", "资料"].map((t, i) => (
            <Tab key={t} href={`#tab-${i}`} $active={i === 0}>{t}</Tab>
          ))}
        </Tabs>
        <FeedPeek><FeedCard /><FeedCard /></FeedPeek>

        <BottomBar>
          <IndexButton>
            <svg width="20" height="8" viewBox="0 0 20 8" aria-hidden="true"><path d="M0 8L10 0l10 8z" fill={color.muted} /></svg>
            <IndexValue>3870.28</IndexValue>
            <IndexMeta><IndexName>上证</IndexName>1.19%</IndexMeta>
          </IndexButton>
          <Action><TradeIcon />交易</Action>
          <Action><PostIcon />发帖</Action>
          <Action><GridIcon />功能</Action>
          <Action><MoreIcon />设自选</Action>
        </BottomBar>

        <SystemNav>
          <SystemButton aria-label="最近任务">
            <svg width="36" height="36" viewBox="0 0 36 36" stroke="#999" strokeWidth="3" aria-hidden="true"><path d="M0 2h36M0 18h36M0 34h36" /></svg>
          </SystemButton>
          <SystemButton aria-label="主屏幕">
            <svg width="36" height="36" viewBox="0 0 36 36" fill="none" stroke="#999" strokeWidth="3" aria-hidden="true"><rect x="1.500" y="1.500" width="33" height="33" rx="7" /></svg>
          </SystemButton>
          <SystemButton aria-label="返回上级">
            <svg width="36" height="36" viewBox="0 0 36 36" fill="none" stroke="#999" strokeWidth="2.500" strokeLinejoin="round" aria-hidden="true"><path d="M32 2q3-1 3 2v28q0 3-3 2L3 20q-3-2 0-4z" /></svg>
          </SystemButton>
        </SystemNav>
      </Page>
    </>
  );
}
